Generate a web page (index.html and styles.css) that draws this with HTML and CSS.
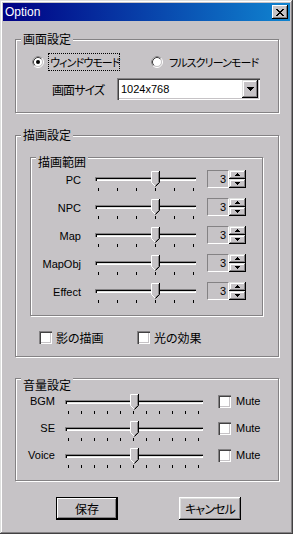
FILE: index.html
```html
<!DOCTYPE html>
<html lang="ja">
<head>
    <meta charset="UTF-8">
    <title>Option</title>
    <link rel="stylesheet" href="styles.css">
</head>
<body>
<div class="window">
    <div class="titlebar">
        <span class="title">Option</span>
        <span class="close-btn">
            <svg width="8" height="7" viewBox="0 0 8 7" shape-rendering="crispEdges">
                <path d="M0 0h2v1h-2zM6 0h2v1h-2zM1 1h2v1h-2zM5 1h2v1h-2zM2 2h4v1h-4zM3 3h2v1h-2zM2 4h4v1h-4zM1 5h2v1h-2zM5 5h2v1h-2zM0 6h2v1h-2zM6 6h2v1h-2z" fill="#000"/>
            </svg>
        </span>
    </div>

    <div class="client">
        <!-- 画面設定 -->
        <div class="group g-screen">
            <span class="group-title ja">画面設定</span>
            <div class="radio-row">
                <label class="radio">
                    <svg class="radio-dot" width="12" height="12" viewBox="0 0 12 12">
                        <circle cx="6" cy="6" r="5.5" fill="none" stroke="#fff"/>
                        <path d="M2.11 9.89A5.5 5.5 0 0 1 9.89 2.11" fill="none" stroke="#848284"/>
                        <circle cx="6" cy="6" r="4.5" fill="#fff" stroke="#c6c3c6"/>
                        <path d="M2.82 9.18A4.5 4.5 0 0 1 9.18 2.82" fill="none" stroke="#424142"/>
                        <circle cx="6" cy="6" r="2" fill="#000"/>
                    </svg>
                    <span class="radio-text focus ja kana">ウィンドウモード</span>
                </label>
                <label class="radio second">
                    <svg class="radio-dot" width="12" height="12" viewBox="0 0 12 12">
                        <circle cx="6" cy="6" r="5.5" fill="none" stroke="#fff"/>
                        <path d="M2.11 9.89A5.5 5.5 0 0 1 9.89 2.11" fill="none" stroke="#848284"/>
                        <circle cx="6" cy="6" r="4.5" fill="#fff" stroke="#c6c3c6"/>
                        <path d="M2.82 9.18A4.5 4.5 0 0 1 9.18 2.82" fill="none" stroke="#424142"/>
                    </svg>
                    <span class="radio-text ja kana">フルスクリーンモード</span>
                </label>
            </div>
            <div class="size-row">
                <span class="size-label ja kana">画面サイズ</span>
                <div class="combo">
                    <span class="combo-value">1024x768</span>
                    <span class="combo-btn">
                        <svg width="7" height="4" viewBox="0 0 7 4" shape-rendering="crispEdges">
                            <path d="M0 0h7v1h-7zM1 1h5v1h-5zM2 2h3v1h-3zM3 3h1v1h-1z" fill="#000"/>
                        </svg>
                    </span>
                </div>
            </div>
        </div>

        <!-- 描画設定 -->
        <div class="group g-draw">
            <span class="group-title ja">描画設定</span>
            <div class="group g-range">
                <span class="group-title ja">描画範囲</span>

                <div class="draw-row">
                    <span class="row-label">PC</span>
                    <div class="slider slider-draw">
                        <div class="track"></div>
                        <div class="ticks"><i></i><i></i><i></i><i></i><i></i><i></i></div>
                        <svg class="thumb" style="left:56px" width="9" height="16" viewBox="0 0 9 16">
                            <polygon points="0.5,0.5 8.5,0.5 8.5,11.5 4.5,15.5 0.5,11.5" fill="#c6c3c6"/>
                            <polyline points="4,15 0.5,11.5 0.5,0.5 8,0.5" fill="none" stroke="#fff"/>
                            <polyline points="7.5,1 7.5,11.5 4.5,14.5" fill="none" stroke="#848284"/>
                            <polyline points="8.5,0 8.5,11.5 4.5,15.5" fill="none" stroke="#000"/>
                        </svg>
                    </div>
                    <div class="spin">
                        <span class="spin-edit">3</span>
                        <span class="spin-btns">
                            <span><svg width="5" height="3" viewBox="0 0 5 3" shape-rendering="crispEdges"><path d="M2 0h1v1h-1zM1 1h3v1h-3zM0 2h5v1h-5z" fill="#000"/></svg></span>
                            <span><svg width="5" height="3" viewBox="0 0 5 3" shape-rendering="crispEdges"><path d="M0 0h5v1h-5zM1 1h3v1h-3zM2 2h1v1h-1z" fill="#000"/></svg></span>
                        </span>
                    </div>
                </div>

                <div class="draw-row">
                    <span class="row-label">NPC</span>
                    <div class="slider slider-draw">
                        <div class="track"></div>
                        <div class="ticks"><i></i><i></i><i></i><i></i><i></i><i></i></div>
                        <svg class="thumb" style="left:56px" width="9" height="16" viewBox="0 0 9 16">
                            <polygon points="0.5,0.5 8.5,0.5 8.5,11.5 4.5,15.5 0.5,11.5" fill="#c6c3c6"/>
                            <polyline points="4,15 0.5,11.5 0.5,0.5 8,0.5" fill="none" stroke="#fff"/>
                            <polyline points="7.5,1 7.5,11.5 4.5,14.5" fill="none" stroke="#848284"/>
                            <polyline points="8.5,0 8.5,11.5 4.5,15.5" fill="none" stroke="#000"/>
                        </svg>
                    </div>
                    <div class="spin">
                        <span class="spin-edit">3</span>
                        <span class="spin-btns">
                            <span><svg width="5" height="3" viewBox="0 0 5 3" shape-rendering="crispEdges"><path d="M2 0h1v1h-1zM1 1h3v1h-3zM0 2h5v1h-5z" fill="#000"/></svg></span>
                            <span><svg width="5" height="3" viewBox="0 0 5 3" shape-rendering="crispEdges"><path d="M0 0h5v1h-5zM1 1h3v1h-3zM2 2h1v1h-1z" fill="#000"/></svg></span>
                        </span>
                    </div>
                </div>

                <div class="draw-row">
                    <span class="row-label">Map</span>
                    <div class="slider slider-draw">
                        <div class="track"></div>
                        <div class="ticks"><i></i><i></i><i></i><i></i><i></i><i></i></div>
                        <svg class="thumb" style="left:56px" width="9" height="16" viewBox="0 0 9 16">
                            <polygon points="0.5,0.5 8.5,0.5 8.5,11.5 4.5,15.5 0.5,11.5" fill="#c6c3c6"/>
                            <polyline points="4,15 0.5,11.5 0.5,0.5 8,0.5" fill="none" stroke="#fff"/>
                            <polyline points="7.5,1 7.5,11.5 4.5,14.5" fill="none" stroke="#848284"/>
                            <polyline points="8.5,0 8.5,11.5 4.5,15.5" fill="none" stroke="#000"/>
                        </svg>
                    </div>
                    <div class="spin">
                        <span class="spin-edit">3</span>
                        <span class="spin-btns">
                            <span><svg width="5" height="3" viewBox="0 0 5 3" shape-rendering="crispEdges"><path d="M2 0h1v1h-1zM1 1h3v1h-3zM0 2h5v1h-5z" fill="#000"/></svg></span>
                            <span><svg width="5" height="3" viewBox="0 0 5 3" shape-rendering="crispEdges"><path d="M0 0h5v1h-5zM1 1h3v1h-3zM2 2h1v1h-1z" fill="#000"/></svg></span>
                        </span>
                    </div>
                </div>

                <div class="draw-row">
                    <span class="row-label">MapObj</span>
                    <div class="slider slider-draw">
                        <div class="track"></div>
                        <div class="ticks"><i></i><i></i><i></i><i></i><i></i><i></i></div>
                        <svg class="thumb" style="left:56px" width="9" height="16" viewBox="0 0 9 16">
                            <polygon points="0.5,0.5 8.5,0.5 8.5,11.5 4.5,15.5 0.5,11.5" fill="#c6c3c6"/>
                            <polyline points="4,15 0.5,11.5 0.5,0.5 8,0.5" fill="none" stroke="#fff"/>
                            <polyline points="7.5,1 7.5,11.5 4.5,14.5" fill="none" stroke="#848284"/>
                            <polyline points="8.5,0 8.5,11.5 4.5,15.5" fill="none" stroke="#000"/>
                        </svg>
                    </div>
                    <div class="spin">
                        <span class="spin-edit">3</span>
                        <span class="spin-btns">
                            <span><svg width="5" height="3" viewBox="0 0 5 3" shape-rendering="crispEdges"><path d="M2 0h1v1h-1zM1 1h3v1h-3zM0 2h5v1h-5z" fill="#000"/></svg></span>
                            <span><svg width="5" height="3" viewBox="0 0 5 3" shape-rendering="crispEdges"><path d="M0 0h5v1h-5zM1 1h3v1h-3zM2 2h1v1h-1z" fill="#000"/></svg></span>
                        </span>
                    </div>
                </div>

                <div class="draw-row">
                    <span class="row-label">Effect</span>
                    <div class="slider slider-draw">
                        <div class="track"></div>
                        <div class="ticks"><i></i><i></i><i></i><i></i><i></i><i></i></div>
                        <svg class="thumb" style="left:56px" width="9" height="16" viewBox="0 0 9 16">
                            <polygon points="0.5,0.5 8.5,0.5 8.5,11.5 4.5,15.5 0.5,11.5" fill="#c6c3c6"/>
                            <polyline points="4,15 0.5,11.5 0.5,0.5 8,0.5" fill="none" stroke="#fff"/>
                            <polyline points="7.5,1 7.5,11.5 4.5,14.5" fill="none" stroke="#848284"/>
                            <polyline points="8.5,0 8.5,11.5 4.5,15.5" fill="none" stroke="#000"/>
                        </svg>
                    </div>
                    <div class="spin">
                        <span class="spin-edit">3</span>
                        <span class="spin-btns">
                            <span><svg width="5" height="3" viewBox="0 0 5 3" shape-rendering="crispEdges"><path d="M2 0h1v1h-1zM1 1h3v1h-3zM0 2h5v1h-5z" fill="#000"/></svg></span>
                            <span><svg width="5" height="3" viewBox="0 0 5 3" shape-rendering="crispEdges"><path d="M0 0h5v1h-5zM1 1h3v1h-3zM2 2h1v1h-1z" fill="#000"/></svg></span>
                        </span>
                    </div>
                </div>
            </div>

            <div class="check-row">
                <label class="check"><span class="cb"></span><span class="ja">影の描画</span></label>
                <label class="check"><span class="cb"></span><span class="ja">光の効果</span></label>
            </div>
        </div>

        <!-- 音量設定 -->
        <div class="group g-volume">
            <span class="group-title ja">音量設定</span>

            <div class="vol-row">
                <span class="vol-label">BGM</span>
                <div class="slider slider-vol">
                    <div class="track"></div>
                    <div class="ticks"><i></i><i></i><i></i><i></i><i></i><i></i><i></i><i></i><i></i><i></i><i></i></div>
                    <svg class="thumb" style="left:65px" width="9" height="16" viewBox="0 0 9 16">
                        <polygon points="0.5,0.5 8.5,0.5 8.5,11.5 4.5,15.5 0.5,11.5" fill="#c6c3c6"/>
                        <polyline points="4,15 0.5,11.5 0.5,0.5 8,0.5" fill="none" stroke="#fff"/>
                        <polyline points="7.5,1 7.5,11.5 4.5,14.5" fill="none" stroke="#848284"/>
                        <polyline points="8.5,0 8.5,11.5 4.5,15.5" fill="none" stroke="#000"/>
                    </svg>
                </div>
                <label class="check mute"><span class="cb"></span><span>Mute</span></label>
            </div>

            <div class="vol-row">
                <span class="vol-label">SE</span>
                <div class="slider slider-vol">
                    <div class="track"></div>
                    <div class="ticks"><i></i><i></i><i></i><i></i><i></i><i></i><i></i><i></i><i></i><i></i><i></i></div>
                    <svg class="thumb" style="left:65px" width="9" height="16" viewBox="0 0 9 16">
                        <polygon points="0.5,0.5 8.5,0.5 8.5,11.5 4.5,15.5 0.5,11.5" fill="#c6c3c6"/>
                        <polyline points="4,15 0.5,11.5 0.5,0.5 8,0.5" fill="none" stroke="#fff"/>
                        <polyline points="7.5,1 7.5,11.5 4.5,14.5" fill="none" stroke="#848284"/>
                        <polyline points="8.5,0 8.5,11.5 4.5,15.5" fill="none" stroke="#000"/>
                    </svg>
                </div>
                <label class="check mute"><span class="cb"></span><span>Mute</span></label>
            </div>

            <div class="vol-row">
                <span class="vol-label">Voice</span>
                <div class="slider slider-vol">
                    <div class="track"></div>
                    <div class="ticks"><i></i><i></i><i></i><i></i><i></i><i></i><i></i><i></i><i></i><i></i><i></i></div>
                    <svg class="thumb" style="left:65px" width="9" height="16" viewBox="0 0 9 16">
                        <polygon points="0.5,0.5 8.5,0.5 8.5,11.5 4.5,15.5 0.5,11.5" fill="#c6c3c6"/>
                        <polyline points="4,15 0.5,11.5 0.5,0.5 8,0.5" fill="none" stroke="#fff"/>
                        <polyline points="7.5,1 7.5,11.5 4.5,14.5" fill="none" stroke="#848284"/>
                        <polyline points="8.5,0 8.5,11.5 4.5,15.5" fill="none" stroke="#000"/>
                    </svg>
                </div>
                <label class="check mute"><span class="cb"></span><span>Mute</span></label>
            </div>
        </div>

        <div class="button-row">
            <button type="button" class="btn default ja">保存</button>
            <button type="button" class="btn ja kana">キャンセル</button>
        </div>
    </div>
</div>
</body>
</html>
```

FILE: styles.css
```css
* {
    margin: 0;
    padding: 0;
    box-sizing: border-box;
}

body {
    width: 293px;
    height: 534px;
    overflow: hidden;
    background: #c6c3c6;
    font-family: "Liberation Sans", "Noto Sans CJK JP", sans-serif;
    font-size: 11px;
    color: #000;
}

.ja {
    font-family: "Noto Sans CJK JP", "Liberation Sans", sans-serif;
    font-size: 12px;
    font-feature-settings: "palt";
    white-space: nowrap;
}

/* katakana in MS UI Gothic runs narrow */
.kana {
    font-size: 11px;
    letter-spacing: -0.9px;
}

/* window frame */
.window {
    width: 293px;
    height: 534px;
    padding: 3px;
    background: #c6c3c6;
    box-shadow: inset -1px -1px #424142,
                inset 1px 1px #dedfde,
                inset -2px -2px #848284,
                inset 2px 2px #fff;
}

.titlebar {
    display: flex;
    align-items: center;
    height: 18px;
    padding-left: 2px;
    background: linear-gradient(to right, #000084, #1084d0);
    color: #fff;
}

.title {
    font-size: 12px;
    line-height: 18px;
}

.close-btn {
    display: flex;
    align-items: center;
    justify-content: center;
    width: 16px;
    height: 14px;
    margin-left: auto;
    margin-right: 2px;
    background: #c6c3c6;
    box-shadow: inset -1px -1px #000,
                inset 1px 1px #fff,
                inset -2px -2px #848284;
}

.client {
    padding-left: 12px;
}

/* group boxes */
.group {
    border: 1px solid #848284;
    box-shadow: inset 1px 1px #fff, 1px 1px #fff;
}

.group-title {
    display: block;
    width: fit-content;
    height: 14px;
    margin: -8px 0 0 5px;
    padding: 0 2px;
    line-height: 14px;
    background: #c6c3c6;
}

.g-screen {
    width: 264px;
    margin-top: 18px;
    padding-bottom: 12px;
}

.g-draw {
    width: 264px;
    margin-top: 22px;
    padding-bottom: 12px;
}

.g-range {
    margin: 15px 15px 0 14px;
    padding: 5px 0 6px 0;
}

.g-volume {
    width: 264px;
    margin-top: 21px;
    padding: 7px 0 7px 0;
}

/* radios */
.radio-row {
    display: flex;
    align-items: center;
    height: 18px;
    margin-top: 7px;
    padding-left: 16px;
}

.radio {
    display: flex;
    align-items: center;
}

.radio.second {
    margin-left: 31px;
}

.radio-dot {
    margin-right: 4px;
}

.radio-text {
    height: 18px;
    line-height: 16px;
    padding: 0 1px;
    border: 1px solid transparent;
}

.radio-text.focus {
    width: 72px;
    border: 1px dotted #000;
}

/* combo box */
.size-row {
    display: flex;
    align-items: center;
    margin-top: 7px;
    padding-left: 36px;
}

.size-label {
    width: 65px;
    font-size: 12px;
}

.combo {
    display: flex;
    align-items: center;
    width: 143px;
    height: 22px;
    padding: 2px;
    background: #fff;
    box-shadow: inset 1px 1px #848284,
                inset 2px 2px #424142,
                inset -1px -1px #fff,
                inset -2px -2px #c6c3c6;
}

.combo-value {
    flex: 1;
    padding-left: 2px;
}

.combo-btn {
    display: flex;
    align-items: center;
    justify-content: center;
    width: 16px;
    height: 18px;
    background: #c6c3c6;
    box-shadow: inset -1px -1px #000,
                inset 1px 1px #dedfde,
                inset -2px -2px #848284,
                inset 2px 2px #fff;
}

/* sliders */
.draw-row,
.vol-row {
    display: flex;
    align-items: flex-start;
}

.draw-row {
    height: 28px;
}

.vol-row {
    height: 27px;
}

.row-label {
    width: 50px;
    margin-top: 4px;
    line-height: 15px;
    text-align: right;
}

.vol-label {
    width: 39px;
    margin-top: 2px;
    line-height: 15px;
    text-align: right;
}

.slider {
    position: relative;
    height: 22px;
}

.slider-draw {
    width: 101px;
    margin-left: 14px;
}

.slider-vol {
    width: 138px;
    margin-left: 10px;
}

.track {
    height: 4px;
    margin-top: 8px;
    box-shadow: inset 1px 1px #848284,
                inset 2px 2px #000,
                inset -1px -1px #fff,
                inset -2px -2px #dedfde;
}

.ticks {
    display: flex;
    gap: 18px;
    height: 3px;
    margin-top: 7px;
    padding-left: 3px;
}

.slider-vol .ticks {
    gap: 12px;
}

.ticks i {
    width: 1px;
    height: 3px;
    background: #000;
}

.thumb {
    position: absolute;
    top: 2px;
}

/* spin boxes */
.spin {
    display: flex;
    height: 18px;
    margin: 1px 0 0 11px;
}

.spin-edit {
    width: 22px;
    padding-right: 2px;
    border: 1px solid;
    border-color: #848284 #fff #fff #848284;
    line-height: 16px;
    text-align: right;
}

.spin-btns {
    display: flex;
    flex-direction: column;
    width: 17px;
}

.spin-btns span {
    display: flex;
    align-items: center;
    justify-content: center;
    height: 9px;
    box-shadow: inset -1px -1px #000,
                inset 1px 1px #dedfde,
                inset -2px -2px #848284,
                inset 2px 2px #fff;
}

/* checkboxes */
.check {
    display: flex;
    align-items: center;
}

.cb {
    width: 13px;
    height: 13px;
    margin-right: 4px;
    background: #fff;
    box-shadow: inset 1px 1px #848284,
                inset 2px 2px #424142,
                inset -1px -1px #fff,
                inset -2px -2px #c6c3c6;
}

.check-row {
    display: flex;
    height: 14px;
    margin-top: 14px;
    padding-left: 23px;
}

.check-row .check {
    width: 98px;
}

.check.mute {
    margin: 3px 0 0 15px;
    line-height: 13px;
}

.check.mute .cb {
    margin-right: 5px;
}

/* buttons */
.button-row {
    display: flex;
    margin-top: 16px;
    padding-left: 41px;
    gap: 61px;
}

.btn {
    width: 62px;
    height: 23px;
    border: none;
    background: #c6c3c6;
    color: #000;
    box-shadow: inset -1px -1px #000,
                inset 1px 1px #fff,
                inset -2px -2px #848284,
                inset 2px 2px #dedfde;
}

.btn.default {
    border: 1px solid #000;
    box-shadow: inset -1px -1px #000,
                inset 1px 1px #fff,
                inset -2px -2px #848284;
}

.btn.kana {
    font-size: 12px;
}
```
